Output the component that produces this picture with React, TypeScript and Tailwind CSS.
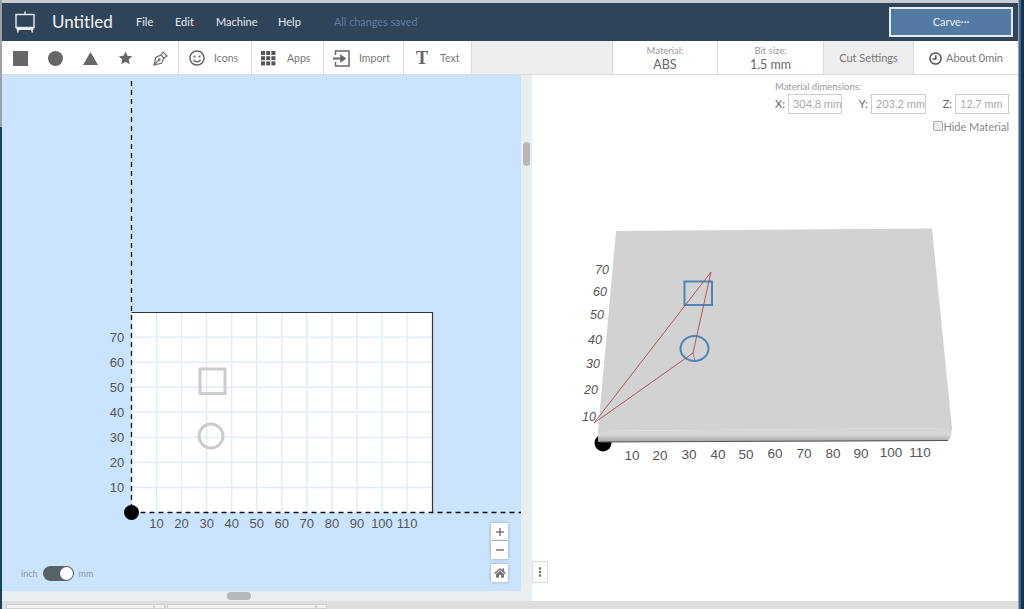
import React from "react";
import { Plus, Minus, EllipsisVertical } from "lucide-react";
import { FaHome, FaRegSmile } from "react-icons/fa";

const font = { fontFamily: "Lato, 'Open Sans', sans-serif" };

function ToolCell({ icon, label, w }: { icon: React.ReactNode; label: string; w: string }) {
  return (
    <div className={`${w} h-full flex items-center bg-white border-r border-[#d8d8d8] text-[10.5px] text-[#777] pt-[1px]`}>
      {icon}
      <span className="pt-[1px]">{label}</span>
    </div>
  );
}

function DesignCanvas() {
  const xs = [10, 20, 30, 40, 50, 60, 70, 80, 90, 100, 110];
  const ys = [10, 20, 30, 40, 50, 60, 70];
  const ox = 131.5;
  const oy = 512.5;
  const s = 2.505;
  const sans = "'Liberation Sans', sans-serif";
  return (
    <svg className="absolute left-0 top-0" width="521" height="526" viewBox="0 75 521 526">
      <rect x={ox} y="312.5" width="301" height="200" fill="#fff" />
      {xs.map((v) => (
        <line key={v} x1={ox + v * s} x2={ox + v * s} y1="313" y2="512" stroke="#e0ecf7" strokeWidth="1.4" />
      ))}
      {ys.map((v) => (
        <line key={v} y1={oy - v * s} y2={oy - v * s} x1={ox} x2="432" stroke="#e0ecf7" strokeWidth="1.4" />
      ))}
      <rect x="200" y="369" width="25" height="24.5" fill="none" stroke="#cccccc" strokeWidth="3" />
      <circle cx="211" cy="436" r="12" fill="none" stroke="#cccccc" strokeWidth="3" />
      <path d={`M${ox} 312.5H432.5V${oy}`} fill="none" stroke="#333" strokeWidth="1.2" />
      <line x1={ox} x2={ox} y1="81" y2={oy} stroke="#111" strokeWidth="1.3" strokeDasharray="5 4" />
      <line x1={ox} x2="521" y1={oy} y2={oy} stroke="#111" strokeWidth="1.3" strokeDasharray="5 4" />
      <circle cx={ox} cy={oy} r="7.5" fill="#000" />
      {xs.map((v) => (
        <text key={v} x={ox + v * s} y="528" textAnchor="middle" fontSize="13" fill="#555" fontFamily={sans}>{v}</text>
      ))}
      {ys.map((v) => (
        <text key={v} x="117" y={oy - v * s + 5} textAnchor="middle" fontSize="13" fill="#555" fontFamily={sans}>{v}</text>
      ))}
    </svg>
  );
}

function Preview3D() {
  const xl: [string, number, number][] = [
    ["10", 632, 460], ["20", 660, 460], ["30", 689, 459], ["40", 718, 459], ["50", 746, 459], ["60", 775, 458],
    ["70", 804, 458], ["80", 833, 458], ["90", 861, 458], ["100", 891, 457], ["110", 920, 457],
  ];
  const yl: [string, number, number][] = [
    ["70", 602, 274], ["60", 600, 296], ["50", 597, 319], ["40", 595, 344], ["30", 593, 368], ["20", 591, 394], ["10", 589, 421],
  ];
  const sans = "'Liberation Sans', sans-serif";
  return (
    <svg className="absolute left-[532px] top-0" width="486" height="526" viewBox="532 75 486 526">
      <defs>
        <linearGradient id="edge" x1="0" x2="0" y1="0" y2="1">
          <stop offset="0" stopColor="#d4d4d4" />
          <stop offset="0.5" stopColor="#d6d6d6" />
          <stop offset="1" stopColor="#a4a4a4" />
        </linearGradient>
      </defs>
      <circle cx="603" cy="443" r="8.5" fill="#000" />
      <polygon points="598,431 952,428 951,436 948,441 598,442" fill="url(#edge)" />
      <line x1="600" x2="948" y1="442" y2="440.5" stroke="#555" strokeWidth="1" />
      <polygon points="616,231 932,228.5 952,428 598,431" fill="#d2d2d2" />
      <rect x="684.5" y="281.5" width="27.5" height="23.5" fill="none" stroke="#4a86b8" strokeWidth="2" />
      <ellipse cx="694.5" cy="348.5" rx="14" ry="12.5" fill="none" stroke="#4a86b8" strokeWidth="2" />
      <path d="M594 423L711 272L693 353L594 423" fill="none" stroke="#a94a52" strokeWidth="0.9" />
      <path d="M693 353L695 361" fill="none" stroke="#a94a52" strokeWidth="0.7" />
      {xl.map(([t, x, y]) => (
        <text key={t} x={x} y={y} textAnchor="middle" fontSize="13.5" fill="#555" fontFamily={sans}>{t}</text>
      ))}
      {yl.map(([t, x, y]) => (
        <text key={t} x={x} y={y} textAnchor="middle" fontSize="12.5" fontStyle="italic" fill="#555" fontFamily={sans}>{t}</text>
      ))}
    </svg>
  );
}

function DimField({ label, value, w }: { label: string; value: string; w: string }) {
  return (
    <div className="flex items-center gap-[3px]">
      <span className="text-[11px] text-[#666]">{label}</span>
      <div className={`${w} h-[20px] border border-[#ccc] bg-white overflow-hidden whitespace-nowrap pl-[4px] text-[11px] leading-[18px] text-[#aaa]`}>{value}</div>
    </div>
  );
}

export default function App() {
  return (
    <div className="relative w-[1024px] h-[609px] overflow-hidden bg-white flex" style={font}>
      {/* left window edge */}
      <div className="w-[2px] shrink-0 flex flex-col">
        <div className="h-[127px] bg-[#9aa3ab]" />
        <div className="flex-1 bg-[#1d3f63]" />
      </div>

      <div className="w-[1016px] shrink-0 flex flex-col border-t-[3px] border-t-[#c9ccd0]">
        {/* header */}
        <header className="h-[38px] shrink-0 bg-[#2f4459] flex items-center text-white">
          <svg className="ml-[13px] w-[20px] h-[22px]" viewBox="0 0 20 22" fill="none" stroke="#e8eef2" strokeWidth="1.4">
            <rect x="1" y="3.5" width="18" height="13" />
            <path d="M10 3.5V0.5" />
            <path d="M1.5 18H18.5" strokeWidth="2" />
            <path d="M3.5 18L2.5 21.5M16.5 18L17.5 21.5" />
          </svg>
          <span className="ml-[17px] text-[17px] text-[#f1f4f6] w-[84px]">Untitled</span>
          <nav className="flex text-[11px] text-[#e6ebef]">
            <span className="w-[39px]">File</span>
            <span className="w-[41px]">Edit</span>
            <span className="w-[62px]">Machine</span>
            <span className="w-[56px]">Help</span>
          </nav>
          <span className="text-[10.8px] text-[#5f7d9b]">All changes saved</span>
          <button className="ml-auto mr-[5px] w-[124px] h-[30px] bg-[#527aa3] border-2 border-[#e4ebf0] text-[11px] text-[#e8eef3]">Carve···</button>
        </header>

        {/* toolbar */}
        <div className="h-[34px] shrink-0 flex bg-[#eeeeee] border-b border-[#dcdcdc] text-[#666]">
          <div className="w-[177px] h-full flex items-center bg-white border-r border-[#d8d8d8] pt-[1px]">
            <div className="ml-[11px] w-[15px] h-[15px] bg-[#666]" />
            <div className="ml-[20px] w-[15px] h-[15px] rounded-full bg-[#666]" />
            <svg className="ml-[20px]" width="15" height="13" viewBox="0 0 15 13"><polygon points="7.5,0 15,13 0,13" fill="#666" /></svg>
            <svg className="ml-[20px]" width="15" height="14" viewBox="0 0 24 24"><polygon points="12,1 15.4,8.3 23.4,9.2 17.5,14.7 19.1,22.6 12,18.6 4.9,22.6 6.5,14.7 0.6,9.2 8.6,8.3" fill="#666" /></svg>
            <svg className="ml-[20px]" width="15" height="15" viewBox="0 0 15 15" fill="none" stroke="#666" strokeWidth="1.1">
              <path d="M1 14L2.8 6.5L8 4L11 7L8.5 12.2L1 14Z" />
              <path d="M1 14L5.6 9.4" />
              <circle cx="6.2" cy="8.8" r="0.9" />
              <path d="M8 4L10 1L14 5L11 7" />
            </svg>
          </div>
          <ToolCell w="w-[73px]" label="Icons" icon={<FaRegSmile className="ml-[10px] mr-[9px]" size={16} color="#666" />} />
          <ToolCell w="w-[72px]" label="Apps" icon={
            <svg className="ml-[9px] mr-[11px]" width="15" height="15" viewBox="0 0 15 15" fill="#555">
              {[0, 5.2, 10.4].flatMap((y) => [0, 5.2, 10.4].map((x) => <rect key={`${x}-${y}`} x={x} y={y} width="4" height="4" />))}
            </svg>
          } />
          <ToolCell w="w-[80px]" label="Import" icon={
            <svg className="ml-[9px] mr-[9px]" width="17" height="17" viewBox="0 0 17 17" fill="none" stroke="#666" strokeWidth="1.5">
              <path d="M2.5 5V1H16V16H2.5V12" />
              <path d="M0 8.5H10" strokeWidth="2" />
              <path d="M8 5.5L12 8.5L8 11.5Z" fill="#666" />
            </svg>
          } />
          <ToolCell w="w-[68px]" label="Text" icon={<span className="ml-[12px] mr-[12px] text-[18px] font-bold leading-none text-[#666]" style={{ fontFamily: "'Liberation Serif', serif" }}>T</span>} />
          <div className="flex-1" />
          <div className="w-[105px] h-full bg-white border-l border-[#d8d8d8] flex flex-col items-center justify-center pt-[3px]">
            <span className="text-[9.5px] leading-[12px] text-[#999]">Material:</span>
            <span className="text-[12.5px] leading-[16px] text-[#666]">ABS</span>
          </div>
          <div className="w-[106px] h-full bg-white border-l border-[#d8d8d8] flex flex-col items-center justify-center pt-[3px]">
            <span className="text-[9.5px] leading-[12px] text-[#999]">Bit size:</span>
            <span className="text-[12.5px] leading-[16px] text-[#666]">1.5 mm</span>
          </div>
          <div className="w-[90px] h-full bg-[#eeeeee] border-l border-[#d8d8d8] flex items-center justify-center text-[11px] text-[#777] pt-[1px]">Cut Settings</div>
          <div className="w-[105px] h-full bg-white border-l border-[#d8d8d8] flex items-center justify-center gap-[4px] text-[11px] text-[#777] pt-[1px]">
            <svg width="13" height="13" viewBox="0 0 13 13" fill="none" stroke="#555" strokeWidth="1.5"><circle cx="6.5" cy="6.5" r="5.6" /><path d="M6.8 3.2V7H3.6" /></svg>
            <span>About 0min</span>
          </div>
        </div>

        {/* workspace */}
        <main className="flex-1 flex min-h-0">
          <div className="w-[519px] flex flex-col shrink-0">
            <div className="flex-1 bg-[#cae4fd]" />
            <div className="h-[10px] bg-[#e9eef1] pl-[225px]">
              <div className="mt-[1px] w-[24px] h-[8px] rounded-full bg-[#b5b8ba]" />
            </div>
          </div>
          <div className="w-[11px] shrink-0 bg-[#e9eef1] flex justify-center">
            <div className="mt-[67px] w-[7px] h-[24px] rounded-full bg-[#b5b8ba]" />
          </div>
          <div className="flex-1 bg-white flex flex-col items-end pr-[9px]">
            <div className="w-[234px] pt-[6px]">
              <div className="text-[9.5px] leading-[12px] text-[#999]">Material dimensions:</div>
              <div className="flex justify-between mt-[1px]">
                <DimField label="X:" value="304.8 mm" w="w-[54px]" />
                <DimField label="Y:" value="203.2 mm" w="w-[55px]" />
                <DimField label="Z:" value="12.7 mm" w="w-[54px]" />
              </div>
              <div className="flex justify-end items-center mt-[5px] text-[11px] text-[#888]">
                <span className="w-[10px] h-[10px] mb-[2px] ml-[1px] border border-[#aaa] rounded-[2px] bg-[#eee]" />
                <span>Hide Material</span>
              </div>
            </div>
          </div>
        </main>

        {/* bottom strip */}
        <div className="h-[8px] shrink-0 bg-[#dedede] pl-[4px] pt-[3px] flex">
          <div className="w-[148px] h-[5px] bg-[#f1f2f3] border border-[#cfd1d2]" />
          <div className="w-[11px] h-[5px] bg-[#f1f2f3] border border-[#cfd1d2]" />
          <div className="ml-[2px] w-[149px] h-[5px] bg-[#f1f2f3] border border-[#cfd1d2]" />
          <div className="w-[11px] h-[5px] bg-[#f1f2f3] border border-[#cfd1d2]" />
        </div>
      </div>

      {/* right window edge */}
      <div className="flex-1 flex">
        <div className="w-[1px] bg-[#9aa3ab]" />
        <div className="w-[2px] bg-[#3b6a95]" />
        <div className="flex-1 bg-[#17324f]" />
      </div>

      {/* free canvases */}
      <div className="absolute left-0 top-[75px] w-[1018px] h-[526px] pointer-events-none">
        <DesignCanvas />
        <Preview3D />
      </div>

      {/* canvas overlays */}
      <div className="absolute left-[491px] top-[523px] flex flex-col">
        <div className="w-[17px] h-[17px] bg-white shadow-[0_0_3px_rgba(0,0,0,0.3)] flex items-center justify-center"><Plus size={12} strokeWidth={3} color="#777" /></div>
        <div className="mt-[1px] w-[17px] h-[18px] bg-white shadow-[0_0_3px_rgba(0,0,0,0.3)] flex items-center justify-center"><Minus size={12} strokeWidth={3} color="#777" /></div>
        <div className="mt-[5px] w-[17px] h-[18px] bg-white shadow-[0_0_3px_rgba(0,0,0,0.3)] flex items-center justify-center"><FaHome size={12} color="#777" /></div>
      </div>
      <div className="absolute left-[532px] top-[561px] w-[16px] h-[22px] bg-white border border-[#dcdcdc] flex items-center justify-center"><EllipsisVertical size={12} strokeWidth={3} color="#666" /></div>
      <div className="absolute left-[21px] top-[566px] flex items-center gap-[5px] text-[9px] text-[#8a96a3]">
        <span>inch</span>
        <div className="w-[31px] h-[15px] rounded-full bg-[#596269] relative">
          <div className="absolute right-[1px] top-[1px] w-[13px] h-[13px] rounded-full bg-white" />
        </div>
        <span>mm</span>
      </div>
    </div>
  );
}
